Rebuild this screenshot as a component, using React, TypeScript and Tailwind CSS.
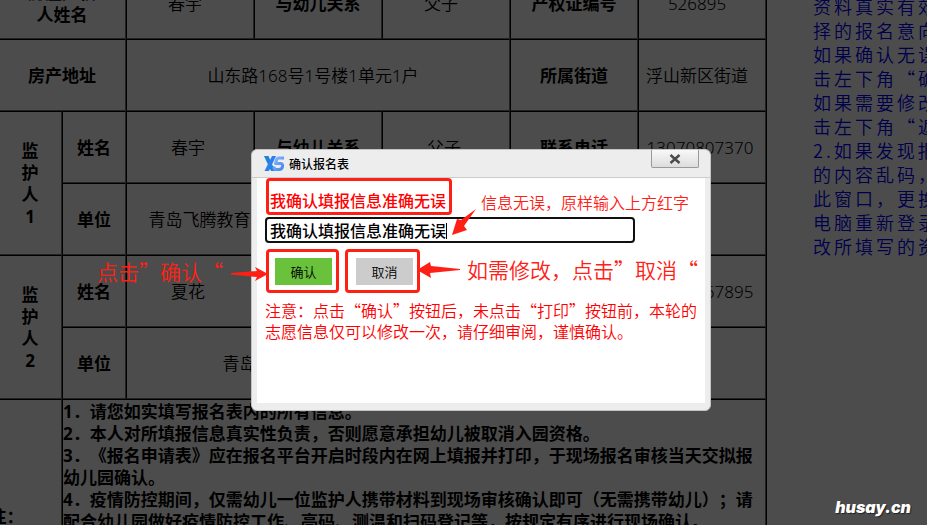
import { useState } from "react";
import type { ReactNode } from "react";

const tips = [
  "资料真实有效",
  "择的报名意向",
  "如果确认无误",
  "击左下角“确",
  "如果需要修改",
  "击左下角“返",
  "2.如果发现报",
  "的内容乱码，",
  "此窗口，更换",
  "电脑重新登录",
  "改所填写的资",
];

const notes = [
  "1．请您如实填写报名表内的所有信息。",
  "2．本人对所填报信息真实性负责，否则愿意承担幼儿被取消入园资格。",
  "3．《报名申请表》应在报名平台开启时段内在网上填报并打印，于现场报名审核当天交拟报",
  "幼儿园确认。",
  "4．疫情防控期间，仅需幼儿一位监护人携带材料到现场审核确认即可（无需携带幼儿）；请",
  "配合幼儿园做好疫情防控工作、亮码、测温和扫码登记等，按规定有序进行现场确认。",
];

const guardians = [
  {
    title: ["监", "护", "人", "1"],
    name: "春宇",
    relation: "父子",
    phone: "13070807370",
    company: "青岛飞腾教育科技发展有限公司市北分公司",
  },
  {
    title: ["监", "护", "人", "2"],
    name: "夏花",
    relation: "母子",
    phone: "13070867895",
    company: "青岛市市北区实验幼儿园",
  },
];

type CellProps = {
  children?: ReactNode;
  span?: number;
  rows?: number;
  className?: string;
};

const edge = "border-t border-l border-r border-b border-t-black border-l-black border-r-neutral-500 border-b-neutral-500";

const Head = ({ children, span, rows, className = "" }: CellProps) => (
  <th colSpan={span} rowSpan={rows} className={`${edge} px-0 pt-0.5 pb-0 text-center font-bold ${className}`}>
    {children}
  </th>
);

const Cell = ({ children, span, className = "pr-1" }: CellProps) => (
  <td colSpan={span} className={`${edge} pt-0.5 pb-0 pl-0 text-center whitespace-nowrap ${className}`}>
    {children}
  </td>
);

export default function App() {
  return (
    <main
      lang="zh-CN"
      className="relative flex h-screen overflow-hidden bg-white font-['Noto_Sans_CJK_SC',sans-serif] font-[350] text-black [text-spacing-trim:space-all]"
    >
      <ApplicationTable />
      <aside className="-mt-1.5 ml-[46px] shrink-0 text-lg leading-6 tracking-[3px] whitespace-nowrap text-[#0000ff]">
        {tips.map((line) => (
          <p key={line}>{line}</p>
        ))}
      </aside>
      <div className="absolute inset-0 bg-black/70" />
      <ConfirmDialog />
      <Annotations />
      <p className="absolute right-4 bottom-1.5 font-['Inter',sans-serif] text-base leading-6 font-black text-white italic [text-shadow:1px_1px_1px_#222]">
        husay.cn
      </p>
    </main>
  );
}

function ApplicationTable() {
  return (
    <div className="-mt-[33px] -ml-[66px] w-[833px] shrink-0">
      <table className="w-full table-fixed border-separate border-spacing-0 border-r border-black font-['Noto_Sans','Noto_Sans_CJK_SC',sans-serif] text-[17px] leading-[22px]">
        <colgroup>
          <col className="w-16" />
          <col className="w-16" />
          <col className="w-16" />
          <col className="w-32" />
          <col className="w-32" />
          <col className="w-32" />
          <col className="w-32" />
          <col className="w-32" />
        </colgroup>
        <tbody>
          <tr className="h-[72px]">
            <Head rows={6} />
            <Head span={2}>
              房屋产权
              <br />
              人姓名
            </Head>
            <Cell className="pr-2.5">春宇</Cell>
            <Head>与幼儿关系</Head>
            <Cell className="pr-2.5">父子</Cell>
            <Head>产权证编号</Head>
            <Cell className="pr-2.5">526895</Cell>
          </tr>
          <tr className="h-[72px]">
            <Head span={2}>房产地址</Head>
            <Cell span={3} className="pr-2.5">
              山东路168号1号楼1单元1户
            </Cell>
            <Head>所属街道</Head>
            <Cell className="pr-2.5">浮山新区街道</Cell>
          </tr>
          {guardians.map((person) => (
            <GuardianRows key={person.name} person={person} />
          ))}
          <tr className="h-[234px]">
            <Head span={2} className="whitespace-nowrap">
              备注：
            </Head>
            <td colSpan={6} className={`${edge} pt-px align-top font-bold whitespace-nowrap`}>
              {notes.map((line) => (
                <p key={line}>{line}</p>
              ))}
            </td>
          </tr>
        </tbody>
      </table>
    </div>
  );
}

function GuardianRows({ person }: { person: (typeof guardians)[number] }) {
  return (
    <>
      <tr className="h-[72px]">
        <Head rows={2}>
          {person.title.map((char) => (
            <span key={char} className="block">
              {char}
            </span>
          ))}
        </Head>
        <Head>姓名</Head>
        <Cell>{person.name}</Cell>
        <Head>与幼儿关系</Head>
        <Cell>{person.relation}</Cell>
        <Head>联系电话</Head>
        <Cell>{person.phone}</Cell>
      </tr>
      <tr className="h-[72px]">
        <Head>单位</Head>
        <Cell span={3} className={person.company.length > 15 ? "pr-4" : "pr-1"}>
          {person.company}
        </Cell>
        <Cell span={2} />
      </tr>
    </>
  );
}

function ConfirmDialog() {
  const [value, setValue] = useState("我确认填报信息准确无误");

  return (
    <section
      role="dialog"
      aria-labelledby="dialog-title"
      className="absolute top-[149px] left-[251px] w-[460px] rounded-md border border-[#c4c4c4] bg-[#ededed]"
    >
      <header className="flex h-7 items-center border-b border-[#cccccc] pr-[11px] pl-3">
        <Logo />
        <h1 id="dialog-title" className="ml-1 grow text-xs font-medium">
          确认报名表
        </h1>
        <button
          type="button"
          aria-label="关闭"
          className="flex h-[18px] w-12 items-center justify-center self-start rounded-b-xs border border-t-0 border-[#999999] bg-linear-to-b from-[#f8f8f8] to-[#dddddd]"
        >
          <svg viewBox="0 0 12 10" className="h-2.5 w-3" fill="none" stroke="#4a4a4a" strokeWidth="2.4">
            <path d="M1.5 1L10.5 9M10.5 1L1.5 9" />
          </svg>
        </button>
      </header>

      <form className="mx-[5px] mb-[7px] h-[225px] bg-white px-2">
        <label
          htmlFor="confirm-text"
          className="ml-px flex h-[37px] w-[186px] items-end rounded-sm border-3 border-[#ff2015] pl-px text-base leading-6 font-medium whitespace-nowrap text-[#ff0000]"
        >
          我确认填报信息准确无误
        </label>
        <div className="relative mt-0.5 w-[370px]">
          <input
            id="confirm-text"
            value={value}
            onChange={(e) => setValue(e.target.value)}
            className="block h-[26px] w-full rounded-sm border-2 border-[#101010] bg-white pl-[3px] text-base leading-5 font-medium text-black outline-none"
          />
          <span className="absolute top-1.5 left-[181px] h-4 w-px bg-black" />
        </div>
        <div className="mt-1.5 ml-px flex gap-1.5">
          <span className="rounded-sm border-3 border-[#ff2015] pt-1.5 pr-1 pb-[5px] pl-1.5">
            <button type="button" className="block h-[27px] w-[57px] bg-[#6ac13c] text-[13px]">
              确认
            </button>
          </span>
          <span className="rounded-sm border-3 border-[#ff2015] pt-1.5 pr-1 pb-[5px] pl-2">
            <button type="button" className="block h-[27px] w-[57px] bg-[#cccccc] text-[13px]">
              取消
            </button>
          </span>
        </div>
        <p className="mt-[7px] text-base leading-[21px] whitespace-nowrap text-[#ff0000]">
          注意：点击“确认”按钮后，未点击“打印”按钮前，本轮的
          <br />
          志愿信息仅可以修改一次，请仔细审阅，谨慎确认。
        </p>
      </form>
    </section>
  );
}

// Hand-made callouts floating over the dialog
function Annotations() {
  return (
    <div className="pointer-events-none whitespace-nowrap text-[#ff2015]">
      <p className="absolute top-[190px] left-[481px] text-base leading-6">信息无误，原样输入上方红字</p>
      <p className="absolute top-[257px] left-[97px] text-[21px] leading-7">点击”确认“</p>
      <p className="absolute top-[255px] left-[467px] text-[21px] leading-7">如需修改，点击”取消“</p>
      <svg viewBox="0 0 26 28" className="absolute top-[208px] left-[451px] h-7 w-[26px]" fill="currentColor">
        <path d="M25 1L10 12L6 11L1 27L16 22L13 18Z" />
      </svg>
      <svg viewBox="0 0 37 16" className="absolute top-[266px] left-[231px] h-4 w-[37px]" fill="currentColor">
        <path d="M0 7L26 5L24 1L37 8L24 15L26 11L0 8.5Z" />
      </svg>
      <svg viewBox="0 0 43 17" className="absolute top-[261px] left-[417px] h-[17px] w-[43px]" fill="currentColor">
        <path d="M43 8L14 5L13 1L0 9L14 17L13 12L43 9Z" />
      </svg>
    </div>
  );
}

function Logo() {
  return (
    <svg viewBox="0 0 21 16" className="h-4 w-[21px]" fill="none" strokeLinejoin="round">
      <defs>
        <linearGradient id="logo-fill" x1="0" y1="0" x2="1" y2="1">
          <stop offset="0" stopColor="#8ab8fb" />
          <stop offset="1" stopColor="#3f82f0" />
        </linearGradient>
      </defs>
      <path d="M0 0H4.500L11 15H7Z" fill="#1d84d8" />
      <path d="M8 0H12L5 15H0.500Z" fill="#2f80ee" />
      <path
        d="M20 2H15Q13 2 12.500 4L11.500 7.500H16.500Q19 7.500 18.500 10.500Q18 13.500 15 13.500H11.500Q9.500 13.500 10.500 10.500"
        stroke="url(#logo-fill)"
        strokeWidth="3"
      />
    </svg>
  );
}
